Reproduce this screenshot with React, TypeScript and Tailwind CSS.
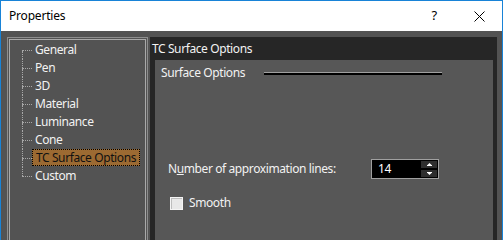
import React from "react";

const items = [
  "General",
  "Pen",
  "3D",
  "Material",
  "Luminance",
  "Cone",
  "TC Surface Options",
  "Custom",
];

const font = { fontFamily: '"Segoe UI", "Noto Sans", sans-serif' };

const TreeRow = ({ label, index, selected }: any) => {
  const first = index === 0;
  const last = index === items.length - 1;
  return (
    <div className="flex h-[18px] items-stretch">
      <div className="ml-[12px] flex w-[10px] shrink-0 flex-col">
        <div className={"h-[9px] " + (first ? "" : "border-l border-dotted border-[#a8a8a8]")} />
        <div className="h-0 border-t border-dotted border-[#a8a8a8]" />
        <div className={"flex-1 " + (last ? "" : "border-l border-dotted border-[#a8a8a8]")} />
      </div>
      <div className="flex items-start">
        <span
          className={
            "flex h-[17px] items-center whitespace-nowrap px-[3px] text-[12px] leading-none tracking-[-0.4px] " +
            (selected
              ? "border border-dotted border-black bg-[#9c6a32] px-[2px] text-[#111]"
              : "text-[#f2f2f2]")
          }
        >
          {label}
        </span>
      </div>
    </div>
  );
};

const SpinArrow = ({ up }: { up: boolean }) => (
  <svg width="7" height="5" viewBox="0 0 7 5">
    {up ? (
      <>
        <path d="M3.5 1 L5.5 3 L1.5 3 Z" fill="#fff" />
        <rect x="1" y="3" width="5" height="1" fill="#fff" />
      </>
    ) : (
      <>
        <rect x="1" y="1" width="5" height="1" fill="#fff" />
        <path d="M1.5 2 L5.5 2 L3.5 4 Z" fill="#fff" />
      </>
    )}
  </svg>
);

export default function App() {
  return (
    <div
      className="flex h-[240px] w-[503px] flex-col overflow-hidden border-x border-t border-[#1883d7] bg-[#535353]"
      style={font}
    >
      {/* title bar */}
      <div className="flex h-[30px] shrink-0 items-center bg-white pl-[8px] text-[12px] tracking-[-0.2px] text-black">
        <span>Properties</span>
        <span className="ml-auto mr-[37px] text-[13px]">?</span>
        <svg width="11" height="11" viewBox="0 0 11 11" className="mr-[17px]">
          <path d="M0.5 0.5 L10.5 10.5 M10.5 0.5 L0.5 10.5" stroke="#000" strokeWidth="1" />
        </svg>
      </div>

      <div className="flex flex-1 pl-[6px] pr-[5px] pt-[6px]">
        {/* tree */}
        <div className="w-[141px] shrink-0 border-l border-t border-r border-[#8e8e8e] pl-px pt-px pr-px">
          <div className="h-full border-l border-t border-r border-[#a9a9a9] pt-px">
            {items.map((it, i) => (
              <TreeRow key={it} label={it} index={i} selected={it === "TC Surface Options"} />
            ))}
          </div>
        </div>

        {/* right panel */}
        <div className="ml-[2px] flex flex-1 flex-col bg-[#262626] tracking-[-0.4px]">
          <div className="flex h-[23px] items-center pl-[2px] text-[12px] text-[#f2f2f2]">
            TC Surface Options
          </div>
          <div className="ml-[5px] mr-[4px] flex flex-1 flex-col bg-[#575757]">
            <div className="flex h-[26px] items-center pl-[6px]">
              <span className="text-[12px] text-[#f2f2f2]">Surface Options</span>
              <div className="ml-auto mr-[51px] flex w-[178px] flex-col">
                <div className="h-px bg-[#a0a0a0]" />
                <div className="h-[2px] bg-black" />
              </div>
            </div>

            <div className="mt-[73px] flex h-[20px] items-center pl-[13px]">
              <span className="w-[203px] shrink-0 text-[12px] text-[#f2f2f2]">
                N<span className="underline">u</span>mber of approximation lines:
              </span>
              <div className="flex h-[20px] w-[68px] border border-[#a0a0a0] bg-black">
                <span className="flex flex-1 items-center pl-[6px] text-[12px] text-white">14</span>
                <div className="my-px mr-px flex w-[16px] flex-col gap-[2px]">
                  <div className="flex h-[7px] items-center justify-center bg-[#2e2e2e]">
                    <SpinArrow up />
                  </div>
                  <div className="flex h-[7px] items-center justify-center bg-[#2e2e2e]">
                    <SpinArrow up={false} />
                  </div>
                </div>
              </div>
            </div>

            <div className="mt-[16px] flex h-[16px] items-center pl-[15px]">
              <div className="h-[13px] w-[13px] border border-[#f4f4f4] bg-[#e8e8e8] shadow-[inset_1px_1px_0_#bdbdbd]" />
              <span className="ml-[6px] text-[12px] text-[#f2f2f2]">Smooth</span>
            </div>
          </div>
        </div>
      </div>
    </div>
  );
}
